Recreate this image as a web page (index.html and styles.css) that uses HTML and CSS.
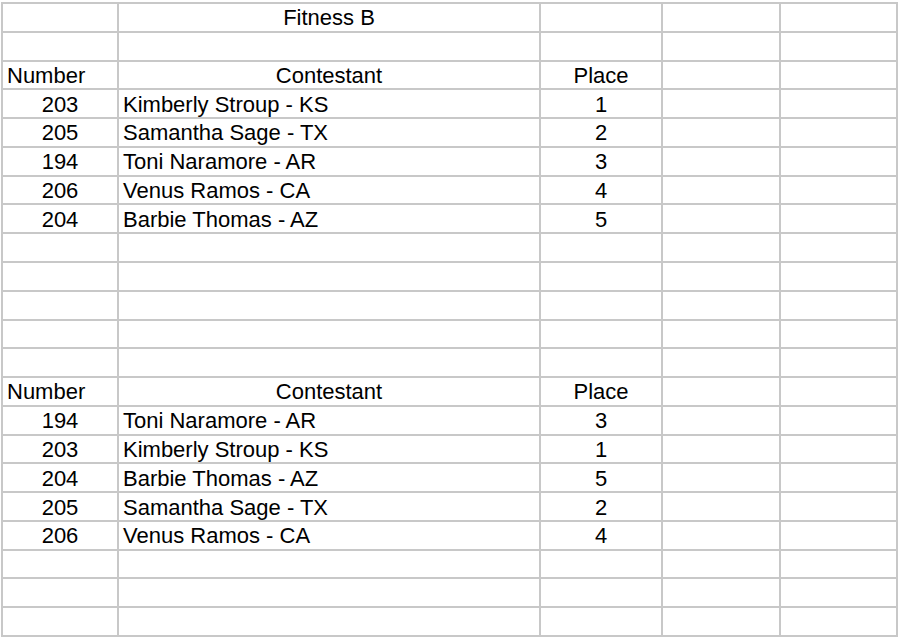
FILE: index.html
```html
<!DOCTYPE html>
<html>
<head>
<meta charset="utf-8">
<link rel="stylesheet" href="styles.css">
</head>
<body>
<div class="sheet">
  <div class="c"></div><div class="c ctr">Fitness B</div><div class="c"></div><div class="c"></div><div class="c"></div>
  <div class="c"></div><div class="c"></div><div class="c"></div><div class="c"></div><div class="c"></div>
  <div class="c">Number</div><div class="c ctr">Contestant</div><div class="c ctr">Place</div><div class="c"></div><div class="c"></div>
  <div class="c ctr">203</div><div class="c">Kimberly Stroup - KS</div><div class="c ctr">1</div><div class="c"></div><div class="c"></div>
  <div class="c ctr">205</div><div class="c">Samantha Sage - TX</div><div class="c ctr">2</div><div class="c"></div><div class="c"></div>
  <div class="c ctr">194</div><div class="c">Toni Naramore - AR</div><div class="c ctr">3</div><div class="c"></div><div class="c"></div>
  <div class="c ctr">206</div><div class="c">Venus Ramos - CA</div><div class="c ctr">4</div><div class="c"></div><div class="c"></div>
  <div class="c ctr">204</div><div class="c">Barbie Thomas - AZ</div><div class="c ctr">5</div><div class="c"></div><div class="c"></div>
  <div class="c"></div><div class="c"></div><div class="c"></div><div class="c"></div><div class="c"></div>
  <div class="c"></div><div class="c"></div><div class="c"></div><div class="c"></div><div class="c"></div>
  <div class="c"></div><div class="c"></div><div class="c"></div><div class="c"></div><div class="c"></div>
  <div class="c"></div><div class="c"></div><div class="c"></div><div class="c"></div><div class="c"></div>
  <div class="c"></div><div class="c"></div><div class="c"></div><div class="c"></div><div class="c"></div>
  <div class="c">Number</div><div class="c ctr">Contestant</div><div class="c ctr">Place</div><div class="c"></div><div class="c"></div>
  <div class="c ctr">194</div><div class="c">Toni Naramore - AR</div><div class="c ctr">3</div><div class="c"></div><div class="c"></div>
  <div class="c ctr">203</div><div class="c">Kimberly Stroup - KS</div><div class="c ctr">1</div><div class="c"></div><div class="c"></div>
  <div class="c ctr">204</div><div class="c">Barbie Thomas - AZ</div><div class="c ctr">5</div><div class="c"></div><div class="c"></div>
  <div class="c ctr">205</div><div class="c">Samantha Sage - TX</div><div class="c ctr">2</div><div class="c"></div><div class="c"></div>
  <div class="c ctr">206</div><div class="c">Venus Ramos - CA</div><div class="c ctr">4</div><div class="c"></div><div class="c"></div>
  <div class="c"></div><div class="c"></div><div class="c"></div><div class="c"></div><div class="c"></div>
  <div class="c"></div><div class="c"></div><div class="c"></div><div class="c"></div><div class="c"></div>
  <div class="c"></div><div class="c"></div><div class="c"></div><div class="c"></div><div class="c"></div>
</div>
</body>
</html>
```
FILE: styles.css
```css
html, body {
  margin: 0;
  padding: 0;
  background: #fff;
}
body {
  font-family: "Liberation Sans", Arial, sans-serif;
  font-size: 22px;
  color: #000;
}
.sheet {
  margin: 2px 0 0 1px;
  width: 897px;
  height: 635px;
  box-sizing: border-box;
  padding: 2px;
  background: #c8c8c8;
  display: grid;
  grid-template-columns: 114px 420px 120px 116px 115px;
  grid-template-rows: repeat(22, 1fr);
  gap: 2px;
}
.c {
  background: #fff;
  display: flex;
  align-items: center;
  padding: 2px 4px 0 4px;
  white-space: nowrap;
  overflow: hidden;
  line-height: 1;
}
.ctr {
  justify-content: center;
}
```
